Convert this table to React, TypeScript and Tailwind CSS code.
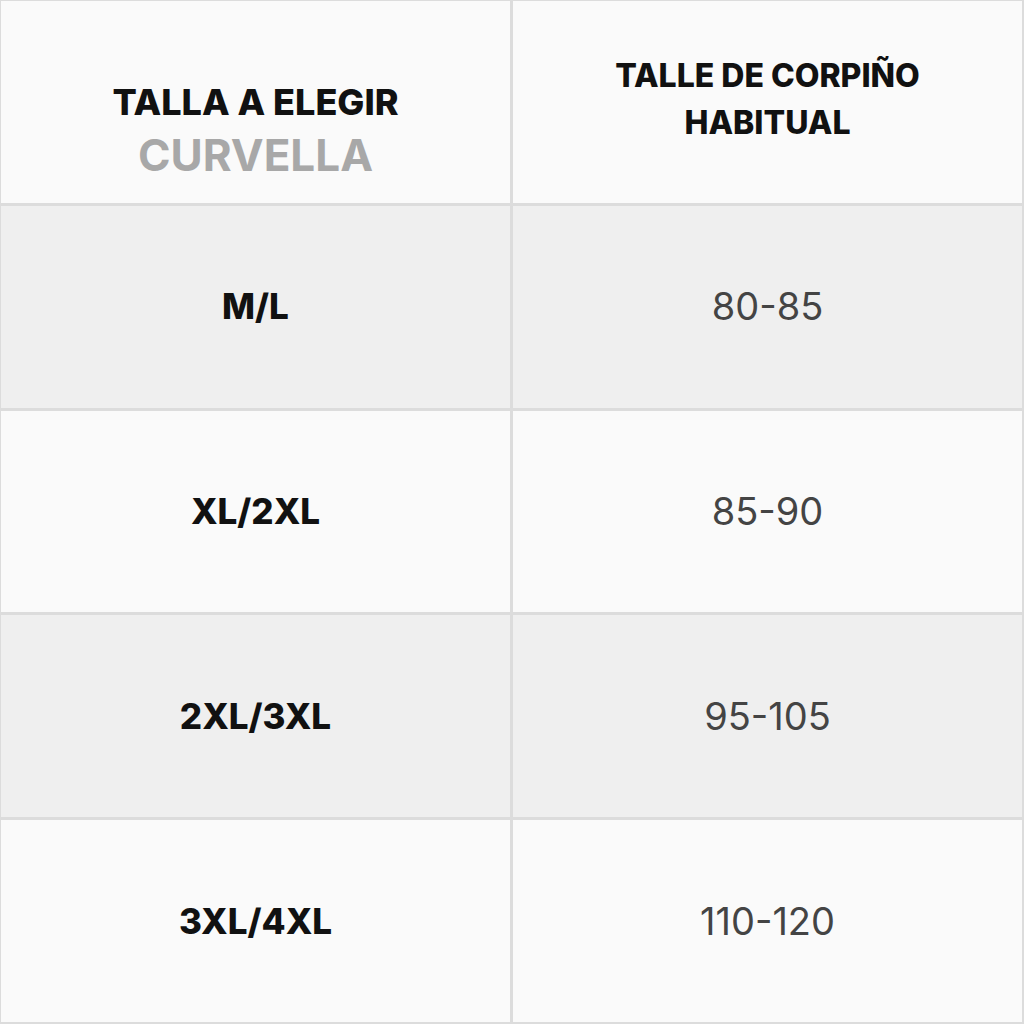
import React from "react";

const rows = [
  { size: "M/L", bra: "80-85", shade: true },
  { size: "XL/2XL", bra: "85-90", shade: false },
  { size: "2XL/3XL", bra: "95-105", shade: true },
  { size: "3XL/4XL", bra: "110-120", shade: false },
];

export default function App() {
  return (
    <div
      className="w-[1024px] h-[1024px] bg-[#dcdcdc] grid grid-cols-2 grid-rows-5 gap-[3px] pt-px pl-px pr-[2px] pb-[2px]"
      style={{ fontFamily: "Inter, 'Noto Sans', sans-serif" }}
    >
      {/* header */}
      <div className="bg-[#fafafa] flex flex-col items-center justify-center pt-[56px]">
        <div className="text-[36px] leading-[44px] font-extrabold text-[#111]">TALLA A ELEGIR</div>
        <div className="mt-[6px] text-[44px] leading-[50px] font-bold text-[#a8a8a8]">CURVELLA</div>
      </div>
      <div className="bg-[#fafafa] flex flex-col items-center justify-center pb-[6px]">
        <div className="text-[32px] leading-[47px] font-extrabold text-[#111] text-center">
          TALLE DE CORPIÑO
          <br />
          HABITUAL
        </div>
      </div>

      {rows.map((r) => (
        <React.Fragment key={r.size}>
          <div className={`${r.shade ? "bg-[#efefef]" : "bg-[#fafafa]"} flex items-center justify-center`}>
            <span className="text-[35px] font-extrabold text-[#111]">{r.size}</span>
          </div>
          <div className={`${r.shade ? "bg-[#efefef]" : "bg-[#fafafa]"} flex items-center justify-center`}>
            <span className="text-[38px] font-normal text-[#444]">{r.bra}</span>
          </div>
        </React.Fragment>
      ))}
    </div>
  );
}
